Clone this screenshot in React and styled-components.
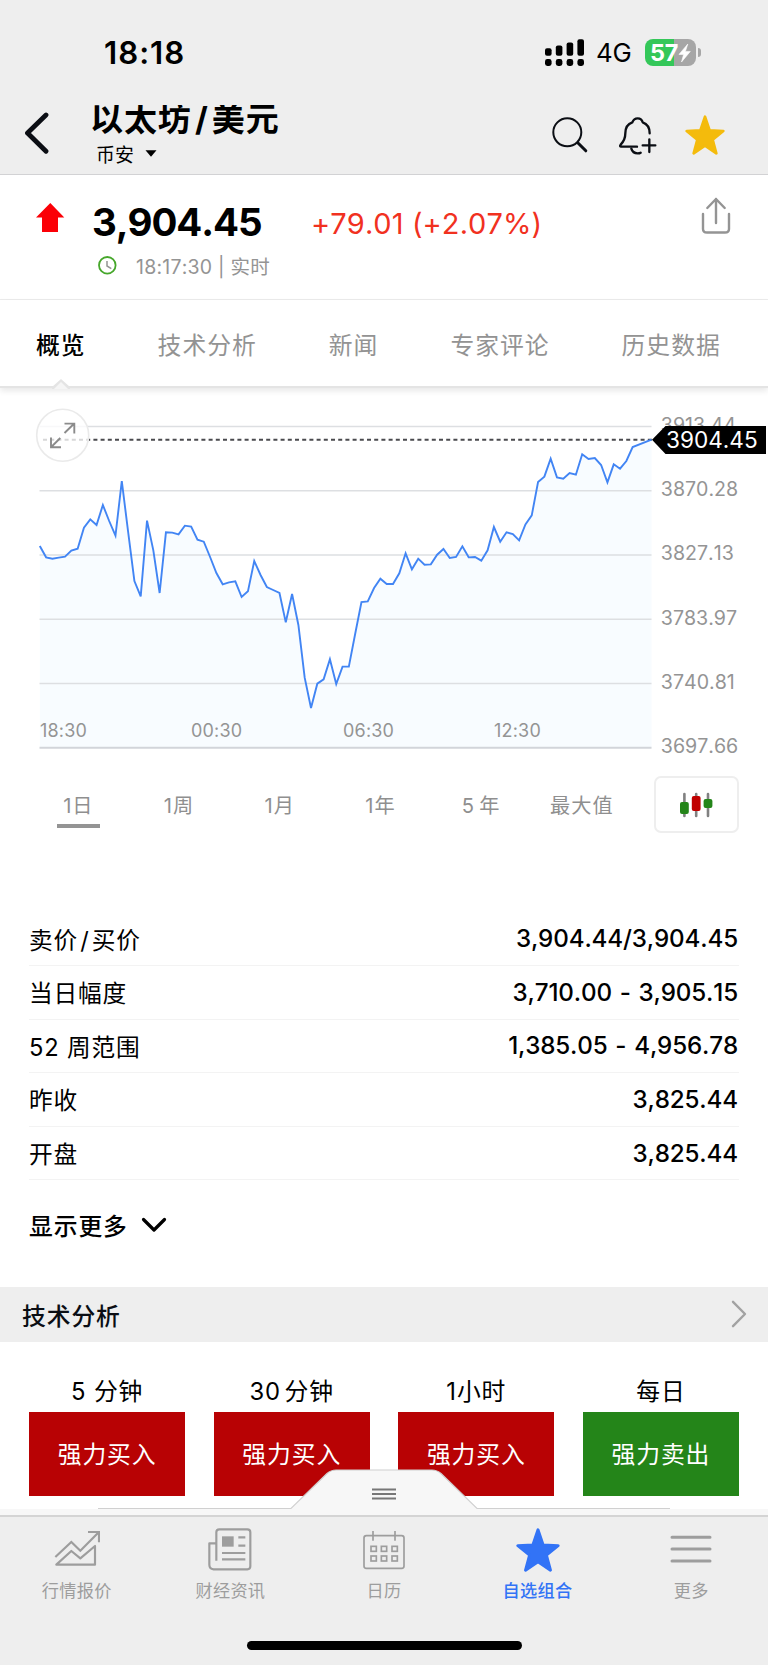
import React from "react";
import styled, { createGlobalStyle } from "styled-components";

const Global = createGlobalStyle`
  * { box-sizing: border-box; }
  body {
    margin: 0;
    background: #fff;
    color: #000;
    font-family: Inter, "Noto Sans CJK SC", sans-serif;
    font-kerning: none;
    -webkit-font-smoothing: antialiased;
  }
  svg { display: block; flex: none; }
`;

const Screen = styled.main`
  position: relative;
  width: 768px;
  height: 1665px;
  overflow: hidden;
  background: #fff;
`;

/* ---------- top area ---------- */
const Top = styled.header`
  height: 175px;
  background: #eee;
  border-bottom: 1px solid #d2d2d4;
`;
const StatusBar = styled.div`
  display: flex;
  align-items: center;
  height: 105px;
  padding: 0 67px 0 104px;
`;
const Clock = styled.span`
  flex: 1;
  font-size: 31.2px;
  font-weight: 600;
  line-height: 40px;
  letter-spacing: 1px;
`;
const Network = styled.span`
  margin: 0 14px 0 11px;
  width: 35px;
  font-size: 25.8px;
  font-weight: 400;
  letter-spacing: -0.2px;
  white-space: nowrap;
`;
const Battery = styled.div`
  display: flex;
  align-items: center;
`;
const BatteryBody = styled.div`
  display: flex;
  align-items: center;
  width: 51px;
  height: 27px;
  padding-left: 5px;
  border-radius: 8px;
  background: linear-gradient(90deg, #34c759 29px, #a6a6a6 29px);
  color: #fff;
  font-size: 23.5px;
  font-weight: 700;
  letter-spacing: -0.3px;
`;
const BatteryTip = styled.div`
  width: 3px;
  height: 9px;
  margin-left: 2px;
  border-radius: 0 3px 3px 0;
  background: #a6a6a6;
`;
const TitleBar = styled.div`
  display: flex;
  height: 69px;
  padding: 0 43px 0 25px;
`;
const TitleBlock = styled.div`
  flex: 1;
  margin-left: 41px;
`;
const TitleClip = styled.div`
  display: flex;
  align-items: flex-end;
  height: 34px;
  overflow: hidden;
`;
const Title = styled.h1`
  margin: 0 0 -2px;
  font-size: 33px;
  font-weight: 700;
  line-height: 44px;
  letter-spacing: 0.9px;
  white-space: nowrap;
`;
const Slash = styled.span`
  margin: 0 ${(p) => p.$space}px;
`;
const Exchange = styled.div`
  display: flex;
  align-items: center;
  gap: 11px;
  height: 26px;
  margin-top: 1.5px;
  padding-left: 6px;
  font-size: 18.9px;
`;
const HeaderIcons = styled.div`
  display: flex;
  gap: 28.5px;
  padding-top: 10px;
`;
const BackSlot = styled.div`
  padding-top: 7px;
`;

/* ---------- quote ---------- */
const Quote = styled.section`
  display: flex;
  height: 125px;
  padding: 0 36px;
  border-bottom: 1px solid #ececec;
`;
const QuoteMain = styled.div`
  flex: 1;
  padding: 22.5px 0 0 27px;
`;
const PriceLine = styled.div`
  display: flex;
  align-items: center;
  height: 48px;
`;
const Price = styled.span`
  width: 219px;
  font-size: 38.5px;
  font-weight: 700;
  letter-spacing: -1.1px;
`;
const Change = styled.span`
  padding-top: 4px;
  color: #f1311f;
  font-size: 29px;
  letter-spacing: 0.1px;
`;
const TimeLine = styled.div`
  display: flex;
  align-items: center;
  gap: 19px;
  height: 32px;
  margin-top: 4px;
  padding-left: 6px;
  color: #949494;
  font-size: 19.5px;
  letter-spacing: 0.22px;
`;
const ArrowSlot = styled.div`
  padding-top: 28px;
`;
const ShareSlot = styled.div`
  padding-top: 21px;
`;

/* ---------- tabs ---------- */
const Tabs = styled.nav`
  position: relative;
  display: flex;
  gap: 72px;
  height: 88px;
  margin-bottom: -1px;
  padding: 0 0 0 36px;
  border-bottom: 2px solid #e4e4e4;
  box-shadow: 0 3px 6px rgba(0, 0, 0, 0.09);
`;
const Tab = styled.a`
  flex: none;
  padding-top: 27.5px;
  color: ${(p) => (p.$active ? "#000" : "#939393")};
  font-size: 23.8px;
  font-weight: ${(p) => (p.$active ? 500 : 400)};
  letter-spacing: 1px;
  line-height: 36px;
`;
const TabNotch = styled.svg`
  position: absolute;
  left: 52px;
  bottom: -3px;
`;

/* ---------- ranges ---------- */
const Ranges = styled.div`
  display: flex;
  align-items: stretch;
  height: 57px;
  margin-top: 11px;
  padding: 0 29px 0 28px;
`;
const RangeGrid = styled.div`
  display: grid;
  grid-template-columns: repeat(6, 100.7px);
  flex: 1;
  justify-items: center;
`;
const Range = styled.button`
  width: 43px;
  padding: 0;
  display: flex;
  justify-content: center;
  height: 52px;
  border: 0;
  border-bottom: 4px solid ${(p) => (p.$active ? "#949494" : "transparent")};
  background: none;
  color: #8f8f8f;
  font: inherit;
  font-kerning: none;
  font-size: 20.2px;
  line-height: 60px;
  letter-spacing: 1px;
  word-spacing: -2.5px;
  white-space: nowrap;
`;
const CandleButton = styled.button`
  display: grid;
  place-items: center;
  width: 85px;
  padding: 0;
  border: 2px solid #eee;
  border-radius: 7px;
  background: #fff;
`;

/* ---------- stats ---------- */
const Stats = styled.dl`
  margin: 79.4px 29px 0;
`;
const Stat = styled.div`
  display: flex;
  justify-content: space-between;
  align-items: center;
  height: 53.6px;
  border-bottom: 1.5px solid #f3f3f3;
  font-size: 23.7px;
`;
const StatName = styled.dt`
  letter-spacing: 0.8px;
`;
const StatValue = styled.dd`
  margin: 0 1px 0 0;
  font-size: 24.2px;
  font-weight: 500;
  letter-spacing: -0.15px;
  word-spacing: 1.5px;
`;
const ShowMore = styled.button`
  display: flex;
  align-items: center;
  gap: 13px;
  height: 40px;
  margin: 24px 0 0 29px;
  padding: 0;
  border: 0;
  background: none;
  font: inherit;
  font-size: 23.8px;
  font-weight: 500;
  letter-spacing: 0.9px;
`;

/* ---------- technical analysis ---------- */
const SectionHead = styled.h2`
  display: flex;
  align-items: center;
  justify-content: space-between;
  height: 55px;
  margin: 42.6px 0 0;
  padding: 0 21px 0 22px;
  background: #eee;
  color: #0b0e14;
  font-size: 23.8px;
  font-weight: 500;
  letter-spacing: 0.9px;
`;
const Signals = styled.section`
  display: grid;
  grid-template-columns: repeat(4, 1fr);
  column-gap: 28.4px;
  padding: 31px 29px 0;
`;
const Signal = styled.div`
  display: flex;
  flex-direction: column;
  text-align: center;
  font-size: 23.8px;
  letter-spacing: 0.9px;
`;
const SignalTime = styled.span`
  height: 39px;
  line-height: 38px;
  word-spacing: ${(p) => (p.$tight ? -4 : 0)}px;
`;
const SignalBox = styled.div`
  height: 84px;
  background: ${(p) => (p.$sell ? "#248519" : "#b80204")};
  color: #fff;
  line-height: 86px;
`;

/* ---------- bottom dock ---------- */
const Dock = styled.footer`
  position: absolute;
  left: 0;
  right: 0;
  bottom: 0;
`;
const Drawer = styled.svg`
  margin-bottom: -2px;
`;
const TabBar = styled.nav`
  position: relative;
  display: grid;
  grid-template-columns: repeat(5, 1fr);
  height: 126px;
  border-top: 2px solid #d4d4d4;
  background: #eee;
`;
const TabItem = styled.a`
  display: flex;
  flex-direction: column;
  align-items: center;
  padding-top: 11px;
  gap: 7px;
  color: ${(p) => (p.$active ? "#3273f6" : "#9d9d9d")};
  font-size: 17.2px;
  font-weight: ${(p) => (p.$active ? 500 : 400)};
  line-height: 24px;
  letter-spacing: 0.3px;
`;
const HomeArea = styled.div`
  height: 24px;
  background: #eee;
`;
const HomeIndicator = styled.div`
  width: 275px;
  height: 9px;
  margin: 0 auto;
  border-radius: 5px;
  background: #000;
`;

/* ---------- icons ---------- */
const Star = ({ size, color }) => (
  <svg width={size} height={size} viewBox="904 346 120 120">
    <path
      d="M964 351L978 392L1019 394L987 420L998 461L964 438L930 461L941 420L909 394L950 392Z"
      fill={color}
      stroke={color}
      strokeWidth="8"
      strokeLinejoin="round"
    />
  </svg>
);

const SignalBars = () => (
  <svg width="40" height="28" viewBox="0 0 40 28">
    {[9, 6.3, 3.2, 0].map((top, i) => (
      <g key={top}>
        <rect x={i * 10.8} y={top + 0.2} width="6.6" height={16.5 - top} rx="2" />
        <rect x={i * 10.8} y="20" width="6.6" height="7" rx="2.4" />
      </g>
    ))}
  </svg>
);

const Bell = () => (
  <svg width="40" height="42" viewBox="698 342 120 126" fill="none" stroke="#0b0e14" strokeWidth="7" strokeLinecap="round" strokeLinejoin="round">
    <path d="M796 397C796 377 787 368 775 364C773 356 769 352 760 352C751 352 747 356 744 364C729 369 723 382 723 397C723 415 715 425 709 431Q705 436 710 437H758" />
    <path d="M741 443Q745 457 760 457Q766 457 769 455" />
    <path d="M775 433H813M795 415V453" />
  </svg>
);

const icons = {
  quotes: (
    <svg width="46" height="44" viewBox="0 0 138 132" fill="none" stroke="#9d9d9d" strokeWidth="6.5">
      <path d="M4 87L52 42L79 68L134 13M102 12H135V43" />
      <path d="M7 110L52 69L79 91L123 54V110Z" strokeLinejoin="round" />
    </svg>
  ),
  news: (
    <svg width="44" height="44" viewBox="0 0 132 132" fill="none" stroke="#9d9d9d" strokeWidth="6.5">
      <path d="M25 98V13Q25 4 34 4H118Q127 4 127 13V115Q127 124 118 124H17Q4 122 4 110V46H25" strokeLinejoin="round" />
      <rect x="42" y="25" width="35" height="31" fill="#9d9d9d" stroke="none" />
      <path d="M91 28H112M91 53H112M42 75H112M42 94H112" />
    </svg>
  ),
  calendar: (
    <svg width="44" height="44" viewBox="0 0 132 132" fill="none" stroke="#9d9d9d" strokeWidth="5">
      <rect x="6" y="23" width="120" height="98" rx="7" />
      <path d="M33 9V38M99 9V38" />
      {[55, 84].map((y) => [27, 58, 90].map((x) => <rect key={`${x}-${y}`} x={x} y={y} width="16" height="15" />))}
    </svg>
  ),
  star: <Star size={44} color="#3273f6" />,
  more: (
    <svg width="44" height="44" viewBox="0 0 132 132" stroke="#9d9d9d" strokeWidth="9" strokeLinecap="round">
      <path d="M9 28H123M9 63H123M9 99H123" />
    </svg>
  ),
};

/* ---------- chart ---------- */
const LEVELS = [453, 487, 491, 488, 485, 467, 461, 398, 373, 390, 330, 378, 422, 258, 410, 558, 604, 377, 466, 594,
  412, 413, 418, 392, 395, 434, 440, 486, 534, 568, 562, 559, 606, 589, 498, 540, 576, 585, 594, 682, 597, 690, 848,
  939, 866, 853, 793, 867, 815, 815, 717, 621, 619, 579, 551, 567, 567, 535, 475, 523, 491, 509, 508, 479, 462, 489,
  486, 454, 487, 486, 497, 466, 396, 440, 412, 417, 436, 388, 361, 261, 245, 191, 247, 251, 234, 239, 178, 192, 189,
  210, 262, 208, 221, 198, 156];
const POINTS = [
  ...LEVELS.map((v, i) => `${(39.8 + i * 6.307).toFixed(2)},${(v / 3 + 8).toFixed(2)}`),
  "651.5,52.6",
].join(" ");
const GRID = [
  [39.5, "3913.44"],
  [103.7, "3870.28"],
  [168, "3827.13"],
  [232.3, "3783.97"],
  [296.5, "3740.81"],
  [360.8, "3697.66"],
];
const TIMES = [
  [40, "18:30"],
  [191, "00:30"],
  [343, "06:30"],
  [494, "12:30"],
];

const Chart = () => (
  <svg width="768" height="378" viewBox="0 0 768 378" fontFamily="Inter, sans-serif">
    <polygon points={`39.8,361 ${POINTS} 651.5,361`} fill="#f8fcff" />
    {GRID.map(([y, label], i) => (
      <g key={label}>
        <line x1="39.5" x2="651.5" y1={y} y2={y} stroke={i === 5 ? "#d2d5da" : "#dddfe2"} strokeWidth={i === 5 ? 2 : 1.4} />
        <text x="660.8" y={y + 5.2} fontSize="19.6" fill="#949494">{label}</text>
      </g>
    ))}
    {TIMES.map(([x, label]) => (
      <text key={label} x={x} y="349.5" fontSize="18" letterSpacing="0.2" fill="#949494">{label}</text>
    ))}
    <line x1="43" x2="652" y1="52.7" y2="52.7" stroke="#4a4a4e" strokeWidth="2" strokeDasharray="4 3.2" />
    <polyline points={POINTS} fill="none" stroke="#4285f4" strokeWidth="1.9" />
    <circle cx="62.7" cy="48.3" r="26" fill="#fff" fillOpacity="0.78" stroke="#eaeaea" strokeWidth="1.6" />
    <path d="M64.5 46L74 36.8M64.5 36.6H74.3V46.5M60.3 51L51 60.2M51 50.5V60.2H61" fill="none" stroke="#8b8b8b" strokeWidth="1.9" />
    <path d="M652 52.8L665.5 39H766V67H665.5Z" fill="#000" />
    <text x="666" y="60.7" fontSize="22.6" fill="#fff">3904.45</text>
  </svg>
);

const TABS = ["概览", "技术分析", "新闻", "专家评论", "历史数据"];
const RANGES = ["1日", "1周", "1月", "1年", "5 年", "最大值"];
const STATS = [
  [<>卖价<Slash $space={2.2}>/</Slash>买价</>, "3,904.44/3,904.45"],
  ["当日幅度", "3,710.00 - 3,905.15"],
  ["52 周范围", "1,385.05 - 4,956.78"],
  ["昨收", "3,825.44"],
  ["开盘", "3,825.44"],
];
const SIGNALS = [
  { time: "5 分钟", verdict: "强力买入" },
  { time: "30 分钟", verdict: "强力买入", tight: true },
  { time: "1小时", verdict: "强力买入" },
  { time: "每日", verdict: "强力卖出", sell: true },
];
const NAV = [
  ["quotes", "行情报价"],
  ["news", "财经资讯"],
  ["calendar", "日历"],
  ["star", "自选组合", true],
  ["more", "更多"],
];

export default function App() {
  return (
    <Screen>
      <Global />
      <Top>
        <StatusBar>
          <Clock>18:18</Clock>
          <SignalBars />
          <Network>4G</Network>
          <Battery>
            <BatteryBody>
              57
              <svg width="13" height="20" viewBox="0 0 13 20">
                <path d="M9.8 1L1 11.4H5.6L3.5 19L12.3 8.4H7.4Z" fill="#fff" stroke="#fff" strokeWidth="0.6" />
              </svg>
            </BatteryBody>
            <BatteryTip />
          </Battery>
        </StatusBar>
        <TitleBar>
          <BackSlot>
            <svg width="24" height="42" viewBox="0 0 24 42" fill="none" stroke="#0b0e14" strokeWidth="4.8" strokeLinecap="round" strokeLinejoin="round">
              <path d="M21 3L2.5 21L21 39.3" />
            </svg>
          </BackSlot>
          <TitleBlock>
            <TitleClip>
              <Title>以太坊<Slash $space={3.2}>/</Slash>美元</Title>
            </TitleClip>
            <Exchange>
              币安
              <svg width="12" height="7" viewBox="0 0 12 7">
                <path d="M0.5 0.3H11.5L6 6.7Z" />
              </svg>
            </Exchange>
          </TitleBlock>
          <HeaderIcons>
            <svg width="37" height="38" viewBox="0 0 37 38" fill="none" stroke="#0b0e14" strokeLinecap="round">
              <circle cx="16.3" cy="17.3" r="14" strokeWidth="2" />
              <path d="M27 28L34.8 35.8" strokeWidth="3" />
            </svg>
            <Bell />
            <Star size={40} color="#f4bb0c" />
          </HeaderIcons>
        </TitleBar>
      </Top>

      <Quote>
        <ArrowSlot>
          <svg width="29" height="29" viewBox="0 0 29 29">
            <path d="M14.3 0L28.3 14.5H22V29H6V14.5H0Z" fill="#fb0007" />
          </svg>
        </ArrowSlot>
        <QuoteMain>
          <PriceLine>
            <Price>3,904.45</Price>
            <Change>+79.01 (+2.07%)</Change>
          </PriceLine>
          <TimeLine>
            <svg width="19" height="19" viewBox="0 0 19 19" fill="none">
              <circle cx="9.3" cy="9.3" r="8.3" stroke="#46a72b" strokeWidth="1.8" />
              <path d="M9 5V10L13.3 12.6" stroke="#949494" strokeWidth="1.5" />
            </svg>
            18:17:30 | 实时
          </TimeLine>
        </QuoteMain>
        <ShareSlot>
          <svg width="32" height="40" viewBox="0 0 32 40" fill="none" stroke="#949494" strokeWidth="2.4" strokeLinecap="round" strokeLinejoin="round">
            <path d="M3 18V33Q3 36.5 7 36.5H25Q29 36.5 29 33V18M16 27V3M7.3 12L16 3L24.7 12" />
          </svg>
        </ShareSlot>
      </Quote>

      <Tabs>
        {TABS.map((t, i) => (
          <Tab key={t} $active={i === 0}>{t}</Tab>
        ))}
        <TabNotch width="18" height="10" viewBox="0 0 18 10">
          <path d="M0 10V8L9 0L18 8V10Z" fill="#e4e4e4" />
          <path d="M2 10L9 3L16 10Z" fill="#f5f5f5" />
        </TabNotch>
      </Tabs>

      <Chart />

      <Ranges>
        <RangeGrid>
          {RANGES.map((r, i) => (
            <Range key={r} $active={i === 0}>{r}</Range>
          ))}
        </RangeGrid>
        <CandleButton>
          <svg width="34" height="26" viewBox="0 0 34 26">
            <path d="M4.4 2V24M16.2 2V24M28 2V24" stroke="#818181" strokeWidth="2.6" strokeLinecap="round" />
            <rect x="0" y="10" width="8.8" height="12" rx="2" fill="#248519" />
            <rect x="11.8" y="4" width="8.8" height="15" rx="2" fill="#c00000" />
            <rect x="23.6" y="7" width="8.8" height="9" rx="2" fill="#248519" />
          </svg>
        </CandleButton>
      </Ranges>

      <Stats>
        {STATS.map(([name, value], i) => (
          <Stat key={i}>
            <StatName>{name}</StatName>
            <StatValue>{value}</StatValue>
          </Stat>
        ))}
      </Stats>
      <ShowMore>
        显示更多
        <svg width="26" height="17" viewBox="0 0 26 17" fill="none" stroke="#000" strokeWidth="3.2" strokeLinecap="round" strokeLinejoin="round">
          <path d="M2.5 3.5L13 14L23.5 3.5" />
        </svg>
      </ShowMore>

      <SectionHead>
        技术分析
        <svg width="16" height="28" viewBox="0 0 16 28" fill="none" stroke="#a2a2a2" strokeWidth="2.4" strokeLinecap="round" strokeLinejoin="round">
          <path d="M2 1.8L14 14L2 26.2" />
        </svg>
      </SectionHead>
      <Signals>
        {SIGNALS.map(({ time, verdict, tight, sell }) => (
          <Signal key={time}>
            <SignalTime $tight={tight}>{time}</SignalTime>
            <SignalBox $sell={sell}>{verdict}</SignalBox>
          </Signal>
        ))}
      </Signals>

      <Dock>
        <Drawer width="768" height="48" viewBox="0 0 768 48">
          <path d="M0 40H291L327 4.5Q331 1 336 1H432Q437 1 441 4.5L477 40H768V48H0Z" fill="#f7f7f7" />
          <path d="M98 39.5H291L327 4.5Q331 1 336 1H432Q437 1 441 4.5L477 39.5H670" fill="none" stroke="#d0d0d0" strokeWidth="1.2" />
          <path d="M372 20.5H396M372 25H396M372 29.5H396" stroke="#777" strokeWidth="2" />
        </Drawer>
        <TabBar>
          {NAV.map(([icon, label, active]) => (
            <TabItem key={icon} $active={active}>
              {icons[icon]}
              {label}
            </TabItem>
          ))}
        </TabBar>
        <HomeArea>
          <HomeIndicator />
        </HomeArea>
      </Dock>
    </Screen>
  );
}
